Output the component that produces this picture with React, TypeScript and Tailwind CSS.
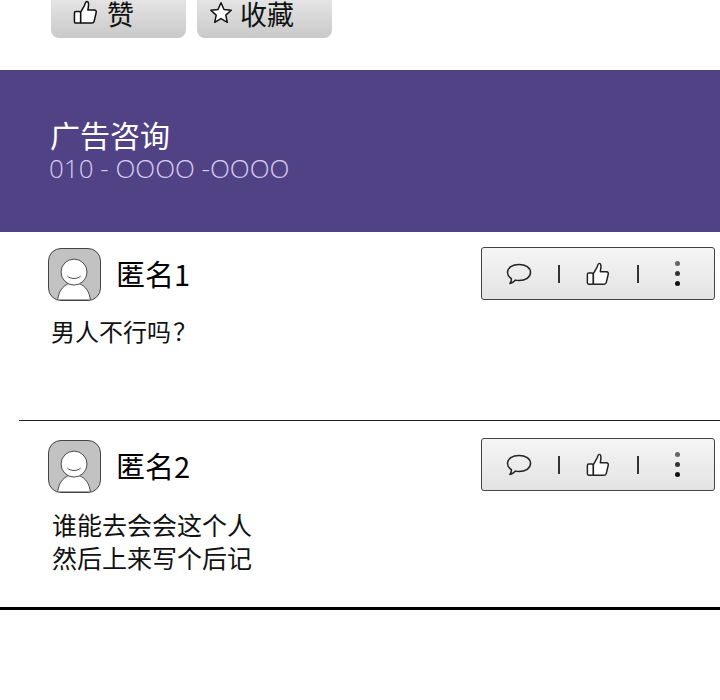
const cjk = "font-['Noto_Sans_CJK_SC','Noto_Sans',sans-serif]";

const ThumbIcon = ({ className }: { className?: string }) => (
  <svg viewBox="0 0 26 26" fill="none" stroke="currentColor" strokeWidth="1.600" strokeLinejoin="round" className={className}>
    <rect x="1.500" y="12" width="6.500" height="12" rx="1.500" fill="#fff" />
    <path d="M8 12.500l4-7c.6-2 1-4 2.500-4 1.600 0 2 2.500 1.500 5.500l-.5 3.500H22c2 0 2.500 1.500 2 3L22 22c-.3 1.500-1 2-2.500 2H8z" fill="#fff" />
  </svg>
);

const StarIcon = () => (
  <svg viewBox="0 0 24 24" fill="#fff" stroke="#111" strokeWidth="1.500" strokeLinejoin="round" className="mt-[1px] h-[24px] w-[24px]">
    <path d="M12 1.800l3 6.700 7.200.8-5.400 4.800 1.500 7.200-6.300-3.700-6.300 3.700 1.500-7.200L1.800 9.300 9 8.500z" />
  </svg>
);

const Avatar = () => (
  <div className="h-[53px] w-[53px] shrink-0 overflow-hidden rounded-[13px] border border-[#444] bg-[#c2c2c2]">
    <svg viewBox="0 0 53 53" className="h-full w-full" fill="#fff" stroke="#444" strokeWidth="1">
      <path d="M9 53c1-9 5-14 11-17h12c6 3 10 8 11 17z" />
      <circle cx="26" cy="24" r="13.500" />
      <path d="M19 28c3 3.500 11 3.500 14 0" fill="none" />
    </svg>
  </div>
);

const ActionBox = () => (
  <div className="flex h-[53px] w-[234px] items-center rounded-[3px] border border-[#444] bg-gradient-to-b from-[#f5f5f5] to-[#e3e3e3] text-[#222]">
    <svg viewBox="0 0 26 24" fill="none" stroke="currentColor" strokeWidth="1.500" strokeLinejoin="round" className="ml-[24px] h-[24px] w-[26px]">
      <path d="M13 2.500c6.500 0 11.500 3.300 11.500 8s-5 8-11.500 8c-1.200 0-2.400-.1-3.500-.4-1.400 1.700-3.300 2.800-5.500 3.400 1-1.500 1.500-3 1.400-4.900C3 15 1.500 13 1.500 10.500c0-4.700 5-8 11.500-8z" />
    </svg>
    <div className="ml-[26px] h-[18px] w-[2px] bg-[#333]" />
    <ThumbIcon className="ml-[26px] h-[24px] w-[24px]" />
    <div className="ml-[27px] h-[18px] w-[2px] bg-[#333]" />
    <div className="ml-[36px] flex flex-col gap-[5px]">
      <span className="h-[5px] w-[5px] rounded-full bg-[#666]" />
      <span className="h-[5px] w-[5px] rounded-full bg-[#333]" />
      <span className="h-[5px] w-[5px] rounded-full bg-[#111]" />
    </div>
  </div>
);

const TopButton = ({ icon, label, wide }: { icon: React.ReactNode; label: string; wide?: boolean }) => (
  <div className={`flex h-[38px] w-[135px] items-start rounded-b-[8px] bg-gradient-to-b from-[#e4e4e4] to-[#c9c9c9] ${wide ? "gap-[7px] pl-[12px]" : "gap-[9px] pl-[22px]"}`}>
    {icon}
    <span className="text-[27px] leading-[28px] text-[#111]">{label}</span>
  </div>
);

export default function App() {
  return (
    <div className={`h-[700px] w-[720px] overflow-hidden bg-white ${cjk}`}>
      <div className="flex h-[70px] gap-[11px] pl-[51px]">
        <TopButton icon={<ThumbIcon className="h-[25px] w-[25px] text-[#111]" />} label="赞" />
        <TopButton wide icon={<StarIcon />} label="收藏" />
      </div>

      <div className="h-[162px] bg-[#514286] pl-[50px] pt-[46px]">
        <div className="text-[30px] leading-[36px] text-white">广告咨询</div>
        <div className="-ml-[1px] mt-[1px] font-['Open_Sans',sans-serif] text-[26px] font-light leading-[30px] text-[#d4ccf2]">
          010 - OOOO -OOOO
        </div>
      </div>

      <div className="ml-[19px] h-[189px] border-b border-[#222] pl-[29px] pr-[5px] pt-[15px]">
        <div className="flex items-start justify-between">
          <div className="flex items-center gap-[15px] pt-[1px]">
            <Avatar />
            <span className="pb-[4px] text-[29px] leading-[40px] text-black">匿名1</span>
          </div>
          <ActionBox />
        </div>
        <p className="mt-[13px] pl-[3px] text-[24px] leading-[33px] text-[#111]">
          男人不行吗<span className="ml-[2px]">？</span>
        </p>
      </div>

      <div className="ml-[19px] h-[186px] pl-[29px] pr-[5px] pt-[17px]">
        <div className="flex items-start justify-between">
          <div className="flex items-center gap-[15px] pt-[2px]">
            <Avatar />
            <span className="pb-[4px] text-[29px] leading-[40px] text-black">匿名2</span>
          </div>
          <ActionBox />
        </div>
        <p className="mt-[15px] pl-[4px] text-[25px] leading-[33px] text-[#111]">
          谁能去会会这个人
          <br />
          然后上来写个后记
        </p>
      </div>

      <div className="h-[3px] bg-black" />
    </div>
  );
}
